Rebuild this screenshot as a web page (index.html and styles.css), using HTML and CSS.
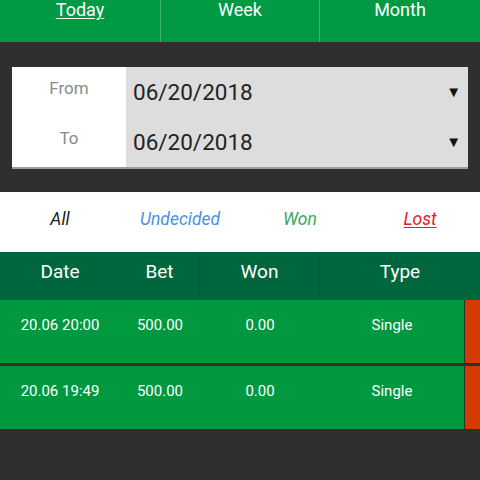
FILE: index.html
```html
<!DOCTYPE html>
<html>
<head>
<meta charset="utf-8">
<link rel="stylesheet" href="styles.css">
</head>
<body>
<div class="app">
  <div class="tabs">
    <div class="tab active">Today</div>
    <div class="tab mid">Week</div>
    <div class="tab">Month</div>
  </div>
  <div class="range">
    <div class="label">From</div>
    <div class="value"><span>06/20/2018</span><span class="arrow">▼</span></div>
    <div class="label">To</div>
    <div class="value"><span>06/20/2018</span><span class="arrow">▼</span></div>
  </div>
  <div class="filters">
    <div class="filter all">All</div>
    <div class="filter undecided">Undecided</div>
    <div class="filter won">Won</div>
    <div class="filter lost">Lost</div>
  </div>
  <div class="thead">
    <div class="th c-date">Date</div>
    <div class="th c-bet div">Bet</div>
    <div class="th c-won div">Won</div>
    <div class="th c-type-h">Type</div>
  </div>
  <div class="rows">
    <div class="row">
      <div class="td c-date">20.06 20:00</div>
      <div class="td c-bet">500.00</div>
      <div class="td c-won">0.00</div>
      <div class="td c-type">Single</div>
      <div class="status"></div>
    </div>
    <div class="row">
      <div class="td c-date">20.06 19:49</div>
      <div class="td c-bet">500.00</div>
      <div class="td c-won">0.00</div>
      <div class="td c-type">Single</div>
      <div class="status"></div>
    </div>
  </div>
</div>
</body>
</html>
```

FILE: styles.css
```css
* { box-sizing: border-box; }
html, body { margin: 0; padding: 0; }
body {
  background: #2f2f2f;
  font-family: Roboto, "Liberation Sans", sans-serif;
  width: 480px;
  height: 480px;
  overflow: hidden;
}
.app { display: flex; flex-direction: column; }

.tabs {
  display: flex;
  height: 42px;
  background: #009a44;
}
.tab {
  width: 160px;
  color: #ffffff;
  font-size: 18px;
  line-height: 20px;
  text-align: center;
  padding-top: 0;
}
.tab.mid {
  border-left: 1px solid #3fb26d;
  border-right: 1px solid #3fb26d;
}
.tab.active { text-decoration: underline; text-underline-offset: 2px; }

.range {
  margin: 25px 12px 0 12px;
  display: grid;
  grid-template-columns: 114px 1fr;
  grid-template-rows: 50px 50px;
  border-bottom: 2px solid #9c9c9c;
}
.label {
  background: #ffffff;
  color: #8a8a8a;
  font-size: 17px;
  display: flex;
  align-items: center;
  justify-content: center;
  padding-bottom: 8px;
}
.value {
  background: #dddddd;
  color: #222222;
  font-size: 22.5px;
  display: flex;
  align-items: center;
  justify-content: space-between;
  padding: 0 7px 0 7px;
}
.arrow { font-size: 15px; color: #111111; }

.filters {
  margin-top: 23px;
  height: 60px;
  background: #ffffff;
  display: flex;
}
.filter {
  width: 120px;
  text-align: center;
  font-style: italic;
  font-size: 17.5px;
  padding-top: 17px;
}
.filter.all { color: #222222; }
.filter.undecided { color: #4a92dc; }
.filter.won { color: #3aa65a; }
.filter.lost { color: #e0202a; text-decoration: underline; text-underline-offset: 2px; }

.thead {
  display: flex;
  height: 48px;
  background: #00663d;
}
.th {
  color: #ffffff;
  font-size: 19px;
  text-align: center;
  padding-top: 8px;
}
.th.div { border-right: 1px solid #005c37; }
.c-date { width: 120px; }
.c-bet { width: 80px; }
.c-won { width: 120px; }
.c-type-h { width: 160px; }
.c-type { width: 145px; border-right: 1px solid #1f3a2a; }

.rows { display: flex; flex-direction: column; gap: 3px; }
.row {
  display: flex;
  height: 63px;
  background: #00993f;
}
.td {
  color: #ffffff;
  font-size: 15px;
  text-align: center;
  padding-top: 16px;
}
.status { width: 15px; background: #d53a00; }
```
